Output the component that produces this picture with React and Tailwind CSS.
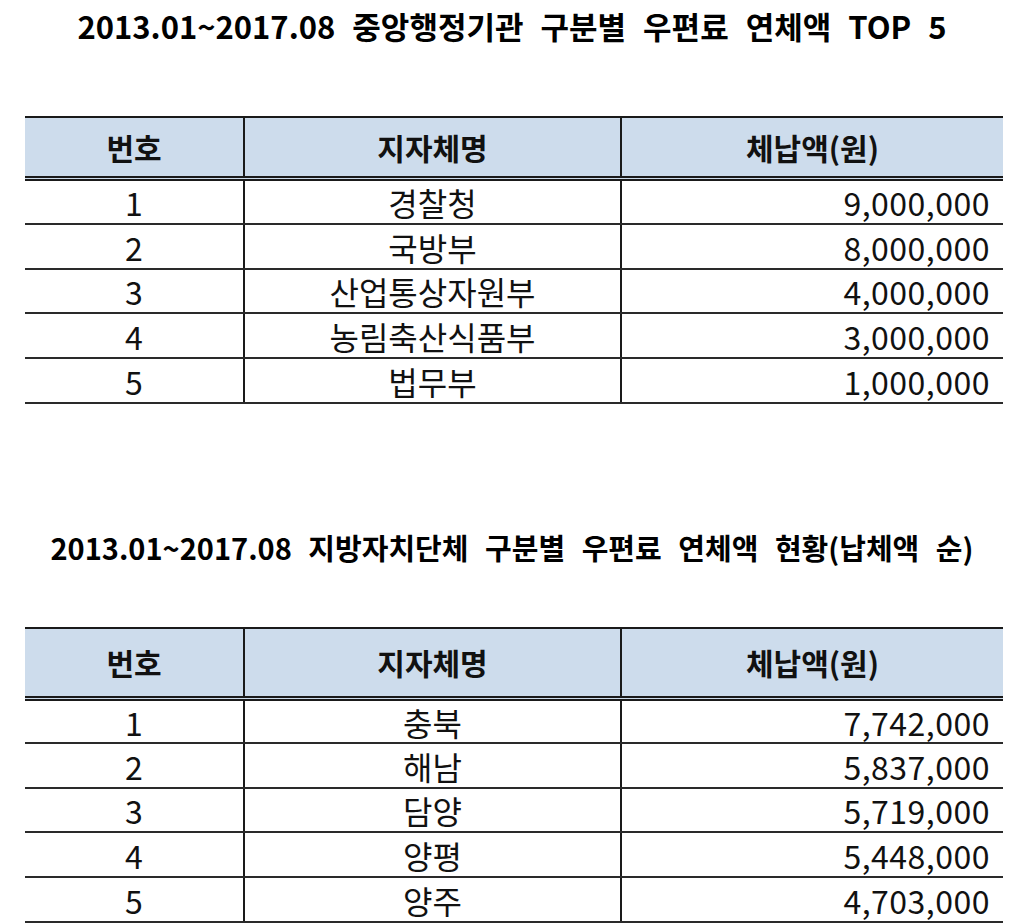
const font = { fontFamily: '"Noto Sans CJK KR", "Noto Sans", sans-serif' };

const central = [
  ["1", "경찰청", "9,000,000", "h-[44px]"],
  ["2", "국방부", "8,000,000", "h-[45px]"],
  ["3", "산업통상자원부", "4,000,000", "h-[44px]"],
  ["4", "농림축산식품부", "3,000,000", "h-[45px]"],
  ["5", "법무부", "1,000,000", "h-[45px]"],
];

const local = [
  ["1", "충북", "7,742,000", "h-[43px]"],
  ["2", "해남", "5,837,000", "h-[45px]"],
  ["3", "담양", "5,719,000", "h-[44px]"],
  ["4", "양평", "5,448,000", "h-[45px]"],
  ["5", "양주", "4,703,000", "h-[45px]"],
];

const Table = ({ rows, headH }) => (
  <div className="ml-[25px] w-[978px] border-t-2 border-[#1a1a1a]">
    <div
      className={`grid grid-cols-[220px_377px_381px] bg-[#cddcec] border-b-[5px] border-double border-[#1a1a1a] ${headH}`}
    >
      <div className="flex items-center justify-center border-r-2 border-[#1a1a1a] text-[30px] font-bold text-[#111]">
        번호
      </div>
      <div className="flex items-center justify-center border-r-2 border-[#1a1a1a] text-[30px] font-bold text-[#111]">
        지자체명
      </div>
      <div className="flex items-center justify-center text-[30px] font-bold text-[#111]">
        체납액(원)
      </div>
    </div>
    {rows.map((r) => (
      <div
        key={r[0]}
        className={`grid grid-cols-[220px_377px_381px] border-b-2 border-[#2a2a2a] text-[32px] leading-none text-[#111] ${r[3]}`}
      >
        <div className="flex items-center justify-center border-r-2 border-[#1a1a1a]">
          {r[0]}
        </div>
        <div className="flex items-center justify-center border-r-2 border-[#1a1a1a]">
          {r[1]}
        </div>
        <div className="flex items-center justify-end pr-[13px] tracking-[0.5px]">
          {r[2]}
        </div>
      </div>
    ))}
  </div>
);

export default function App() {
  return (
    <div className="w-[1024px] h-[924px] bg-white overflow-hidden" style={font}>
      <div className="h-[52px] flex items-center justify-center">
        <h1 className="text-[31px] font-bold text-black [word-spacing:10px]">
          2013.01~2017.08 중앙행정기관 구분별 우편료 연체액 TOP 5
        </h1>
      </div>
      <div className="h-[64px]" />
      <Table rows={central} headH="h-[63px]" />
      <div className="h-[119px]" />
      <div className="h-[50px] flex items-center justify-center">
        <h2 className="text-[29px] font-bold text-black [word-spacing:10px]">
          2013.01~2017.08 지방자치단체 구분별 우편료 연체액 현황(납체액 순)
        </h2>
      </div>
      <div className="h-[54px]" />
      <Table rows={local} headH="h-[72px]" />
    </div>
  );
}
